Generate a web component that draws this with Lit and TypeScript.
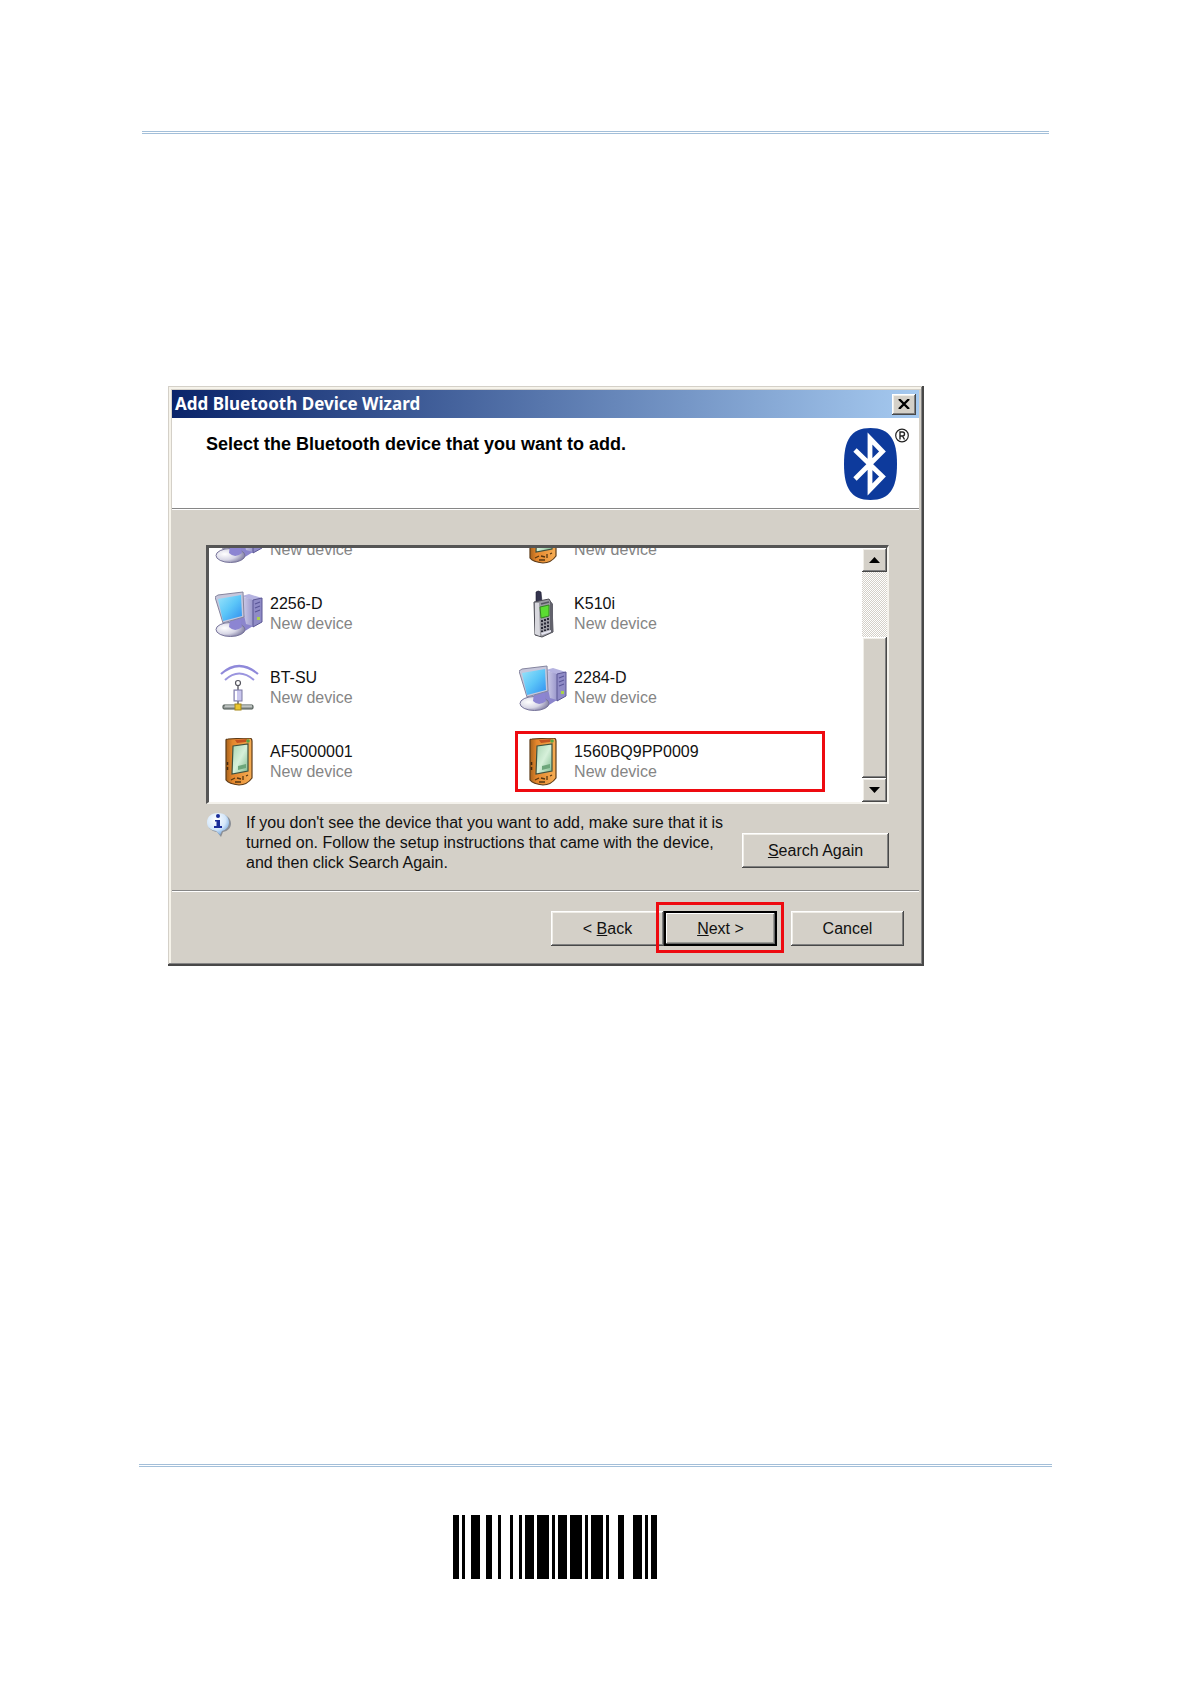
import { LitElement, html, css, svg } from "lit";
import { customElement } from "lit/decorators.js";

type Kind = "computer" | "phone" | "antenna" | "pda";

interface Device {
  name: string;
  kind: Kind;
  marked?: boolean;
}

const DEVICES: Device[] = [
  { name: "", kind: "computer" },
  { name: "", kind: "pda" },
  { name: "2256-D", kind: "computer" },
  { name: "K510i", kind: "phone" },
  { name: "BT-SU", kind: "antenna" },
  { name: "2284-D", kind: "computer" },
  { name: "AF5000001", kind: "pda" },
  { name: "1560BQ9PP0009", kind: "pda", marked: true },
];

// Alternating bar and gap widths, in modules.
const BARS = [
  2, 1, 1, 2, 3, 2, 2, 2, 1, 3, 1, 2, 1, 1, 3, 1, 4, 1, 1, 1, 3, 1, 4, 1, 1, 1,
  4, 1, 1, 3, 2, 3, 3, 1, 1, 1, 2,
];

const icons = {
  computer: svg`
    <defs>
      <linearGradient id="scr" x1="0" y1="0" x2="1" y2="1">
        <stop offset="0" stop-color="#9be4fa"/><stop offset=".5" stop-color="#5cc6f8"/><stop offset="1" stop-color="#2f8df0"/>
      </linearGradient>
      <linearGradient id="tow" x1="0" y1="0" x2="1" y2="0">
        <stop offset="0" stop-color="#d6d5ee"/><stop offset="1" stop-color="#9a97cb"/>
      </linearGradient>
      <radialGradient id="bas" cx=".3" cy=".4" r=".75">
        <stop offset="0" stop-color="#ffffff"/><stop offset=".55" stop-color="#d8d7e6"/><stop offset="1" stop-color="#77749c"/>
      </radialGradient>
    </defs>
    <path d="M27 6 L34 4 L47 8 L38 11 Z" fill="#b5b3e0"/>
    <path d="M26 6 L38 10 L38 37 L26 33 Z" fill="url(#tow)"/>
    <path d="M38 10 L47 8 L47 32 L38 37 Z" fill="#8f8bc6" stroke="#5b5794" stroke-width="1"/>
    <path d="M40 14 L45 12 M40 18 L45 16 M40 22 L45 20" stroke="#5a5698" stroke-width="1.200"/>
    <rect x="42" y="27" width="3" height="3" fill="#a9d24a"/>
    <path d="M22 28 L29 25 L31 34 L38 36 L30 41 L24 40 Z" fill="#8b85cc"/>
    <ellipse cx="15.500" cy="39.500" rx="14.500" ry="7" fill="url(#bas)" stroke="#77749a" stroke-width="1"/>
    <path d="M15 29 L25 27 L27 37 Q20 43 14 37 Z" fill="#8c85d2"/>
    <path d="M0 7 L3 5 L28 2 L29 27 L8 33 Z" fill="#c6c7dc" stroke="#85859f" stroke-width="1"/>
    <path d="M3 9 L26 5 L27 26 L8 31 Z" fill="url(#scr)"/>`,
  phone: svg`
    <path d="M17 2 Q19 0 22 2 L23 12 L17 12 Z" fill="#34344e" stroke="#1d1d30" stroke-width=".6"/>
    <path d="M15 12 L30 9 L33 14 L34 42 L23 47 L16 45 Z" fill="#9b9ba2" stroke="#4d4d55" stroke-width="1"/>
    <path d="M16 13 L20 13 L21 46 L16 44 Z" fill="#d8d8de"/>
    <path d="M31 11 L34 14 L34 42 L31 43 Z" fill="#62626c"/>
    <path d="M22 14 L30 12" stroke="#555560" stroke-width="1.500"/>
    <path d="M21 17 L30 15 L30 26 L22 28 Z" fill="#5bdc32" stroke="#348423" stroke-width="1"/>
    <path d="M23 30 V42 M26 29 V41 M29 28 V40" stroke="#292936" stroke-width="2" stroke-dasharray="2 1.500"/>
    <path d="M22 43 L32 40 L32 42 L23 45 Z" fill="#e4e4f0"/>`,
  antenna: svg`
    <path d="M6 10 Q24 -6 43 10" fill="none" stroke="#8f89da" stroke-width="2.200"/>
    <path d="M10 16 Q24 3 39 16" fill="none" stroke="#9b95df" stroke-width="2"/>
    <circle cx="23" cy="19" r="2.500" fill="#fff" stroke="#56565f" stroke-width="1.200"/>
    <path d="M23 22 V42" stroke="#65656e" stroke-width="1.500"/>
    <rect x="19" y="26" width="8" height="11" fill="#cac7ee" stroke="#7b79a2" stroke-width="1"/>
    <rect x="20" y="27" width="2" height="9" fill="#fff"/>
    <rect x="8" y="41" width="30" height="4" rx="1" fill="#9aa09e" stroke="#45504b" stroke-width="1"/>
    <path d="M10 42 H37" stroke="#e6eae7" stroke-width="1"/>
    <rect x="20" y="40" width="6" height="6" fill="#eac52f" stroke="#a58718" stroke-width="1"/>`,
  pda: svg`
    <defs>
      <linearGradient id="cas" x1="0" y1="0" x2="1" y2="0">
        <stop offset="0" stop-color="#a8641d"/><stop offset=".25" stop-color="#e4862c"/><stop offset="1" stop-color="#f6ae55"/>
      </linearGradient>
      <linearGradient id="lcd" x1="0" y1="0" x2="1" y2="1">
        <stop offset="0" stop-color="#a7d3b0"/><stop offset=".5" stop-color="#d6f0da"/><stop offset="1" stop-color="#7db98c"/>
      </linearGradient>
    </defs>
    <path d="M11 2 Q11 1 13 1 L34 0 Q37 0 37 3 L37 40 Q32 47 24 47 Q14 46 11 42 Z" fill="url(#cas)" stroke="#5e3b17" stroke-width="1.200"/>
    <path d="M20 2 L32 1 L31 4 L22 5 Z" fill="#c4521f"/>
    <circle cx="33" cy="3" r="1.800" fill="#58a345"/>
    <path d="M18 8 L33 6 L33 33 L17 36 Z" fill="url(#lcd)" stroke="#3d5140" stroke-width="1.200"/>
    <path d="M23 28 L31 26 L31 30 L23 32 Z" fill="#6da67b"/>
    <path d="M12.500 24 V34" stroke="#42280f" stroke-width="1.500" stroke-dasharray="3 2"/>
    <path d="M16 42 L20 40 M22 40 L26 41 M28 38 V42 M31 38 L33 37 M20 44 L26 44" stroke="#573711" stroke-width="1.300"/>`,
};

@customElement("device-item")
class DeviceItem extends LitElement {
  static properties = { name: {}, kind: {}, marked: { type: Boolean } };
  declare name: string;
  declare kind: Kind;
  declare marked: boolean;

  static styles = css`
    :host {
      display: block;
    }
    .item {
      position: relative;
      display: flex;
      align-items: center;
      gap: 7px;
      font: 16px/20px "Liberation Sans", Arial, sans-serif;
    }
    .icon {
      flex: none;
      width: 48px;
      height: 48px;
    }
    .text {
      display: flex;
      flex-direction: column;
    }
    .name {
      min-height: 20px;
      color: #111;
    }
    .state {
      color: #858585;
    }
    .marked::after {
      content: "";
      position: absolute;
      inset: -7px 37px -6px -4px;
      border: 3px solid #ee0a10;
    }
  `;

  render() {
    return html`<div class="item ${this.marked ? "marked" : ""}">
      <svg class="icon" viewBox="0 0 48 48" aria-hidden="true">${icons[this.kind]}</svg>
      <div class="text">
        <span class="name">${this.name}</span>
        <span class="state">New device</span>
      </div>
    </div>`;
  }
}

@customElement("app-root")
class AppRoot extends LitElement {
  static styles = css`
    :host {
      display: block;
    }
    * {
      box-sizing: border-box;
    }
    .page {
      display: flex;
      flex-direction: column;
      min-height: 100vh;
      background: #fff;
      font: 16px/20px "Liberation Sans", Arial, sans-serif;
      color: #111;
    }
    .rule {
      height: 3px;
      border: solid #a3bfd9;
      border-width: 1px 0;
    }
    .top {
      padding: 131px 141px 0 142px;
    }
    .main {
      flex: 1;
      padding: 252px 168px 0;
    }
    .bottom {
      padding: 0 138px 105px 139px;
    }
    .barcode {
      display: block;
      width: 204px;
      height: 64px;
      margin: 48px 0 0 314px;
    }
    .window {
      max-width: 756px;
      padding: 4px 5px 4px 4px;
      background: #d4d0c8;
      box-shadow: inset -2px -2px #484848, inset 1px 1px #d4d0c8,
        inset -3px -3px #858585, inset 3px 3px #f6f3ea;
    }
    .titlebar {
      display: flex;
      align-items: center;
      justify-content: space-between;
      height: 28px;
      padding: 0 3px;
      background: linear-gradient(90deg, #0a246a, #a6caf0);
    }
    .title {
      margin: 0;
      font: bold 17px/28px "Noto Sans", "Open Sans", sans-serif;
      color: #fff;
    }
    button {
      display: flex;
      align-items: center;
      justify-content: center;
      margin: 0;
      padding: 0;
      border: 0;
      border-radius: 0;
      background: #d4d0c8;
      font: inherit;
      color: #111;
      white-space: pre;
      box-shadow: inset -1px -1px #484848, inset 1px 1px #fff,
        inset -2px -2px #808080, inset 2px 2px #f0eee8;
    }
    .close {
      width: 24px;
      height: 21px;
    }
    .heading {
      display: flex;
      justify-content: space-between;
      align-items: flex-start;
      height: 90px;
      padding: 10px 9px 0 34px;
      background: #fff;
    }
    .prompt {
      margin: 6px 0 0;
      font: bold 18px/20px "Liberation Sans", Arial, sans-serif;
      color: #000;
    }
    .logo {
      flex: none;
      width: 66px;
      height: 72px;
    }
    .groove {
      height: 2px;
      border-top: 1px solid #868686;
      background: #fff;
    }
    .content {
      padding: 35px 30px 17px 34px;
    }
    .list {
      display: flex;
      height: 259px;
      border: solid;
      border-width: 3px 2px 2px 3px;
      border-color: #555 #f4f2ec #f4f2ec #555;
      background: #fff;
    }
    .view {
      flex: 1;
      min-width: 0;
      display: flex;
      align-items: flex-end;
      overflow: hidden;
      padding: 0 0 16px 6px;
    }
    .devices {
      flex: 1;
      display: grid;
      grid-template-columns: 47fr 53fr;
      row-gap: 26px;
      margin: 0;
      padding: 0;
      list-style: none;
    }
    .scroll {
      display: flex;
      flex-direction: column;
      width: 25px;
      background: repeating-conic-gradient(#d4d0c8 0 25%, #fff 0 50%) 0 0 / 2px 2px;
    }
    .arrow {
      height: 24px;
    }
    .track {
      flex: 1;
    }
    .thumb {
      height: 141px;
    }
    .info {
      display: flex;
      align-items: flex-start;
      gap: 14px;
      margin-top: 8px;
    }
    .balloon {
      flex: none;
      width: 26px;
      height: 26px;
    }
    .hint {
      flex: 1;
      margin: 0;
      padding-top: 1px;
      white-space: pre-line;
    }
    .search {
      flex: none;
      width: 147px;
      height: 35px;
      margin-top: 21px;
    }
    .actions {
      display: flex;
      justify-content: flex-end;
      padding: 19px 15px 16px;
    }
    .action {
      width: 113px;
      height: 35px;
    }
    .default {
      position: relative;
      margin-right: 14px;
    }
    .default .action {
      box-shadow: inset 0 0 0 2px #000, inset -3px -3px #666,
        inset 3px 3px #fff, inset -4px -4px #9a9a94;
    }
    .default::after {
      content: "";
      position: absolute;
      inset: -9px -7px -7px -8px;
      border: 3px solid #ee0a10;
      pointer-events: none;
    }
  `;

  private bars() {
    let x = 0;
    return BARS.map((w, i) => {
      const at = x;
      x += w;
      return i % 2 ? null : svg`<rect x=${at} y="0" width=${w} height="1"/>`;
    });
  }

  render() {
    return html`<div class="page">
      <header class="top"><div class="rule"></div></header>
      <main class="main">
        <section class="window" aria-labelledby="title">
          <div class="titlebar">
            <h1 class="title" id="title">Add Bluetooth Device Wizard</h1>
            <button class="close" aria-label="Close">
              <svg width="12" height="10" viewBox="0 0 12 10" aria-hidden="true">
                <path d="M1 0 L11 10 M11 0 L1 10" stroke="#000" stroke-width="2.300" />
              </svg>
            </button>
          </div>
          <div class="heading">
            <h2 class="prompt">Select the Bluetooth device that you want to add.</h2>
            <svg class="logo" viewBox="0 0 66 72" role="img" aria-label="Bluetooth">
              <path d="M26.500 0 C46 0 53 12 53 36 C53 60 46 72 26.500 72 C7 72 0 60 0 36 C0 12 7 0 26.500 0 Z" fill="#0d3a9c" />
              <path d="M11 22 L38.500 48.500 L26 61.500 V10.500 L38.500 23.500 L11 51" fill="none" stroke="#fff" stroke-width="4.800" stroke-miterlimit="6" />
              <circle cx="58" cy="7.500" r="6.300" fill="#fff" stroke="#222" stroke-width="1.200" />
              <path d="M56 11.500 V4 H58.500 Q60.500 4 60.500 6 Q60.500 8 58.500 8 H56 M58.500 8 L60.500 11.500" fill="none" stroke="#222" stroke-width="1.400" />
            </svg>
          </div>
          <div class="groove"></div>
          <div class="content">
            <div class="list">
              <div class="view">
                <ul class="devices">
                  ${DEVICES.map(
                    (d) => html`<li>
                      <device-item .name=${d.name} .kind=${d.kind} .marked=${!!d.marked}></device-item>
                    </li>`
                  )}
                </ul>
              </div>
              <div class="scroll">
                <button class="arrow" aria-label="Scroll up">
                  <svg width="11" height="6" viewBox="0 0 11 6" aria-hidden="true"><path d="M0 6 L5.500 0 L11 6 Z" /></svg>
                </button>
                <div class="track"></div>
                <button class="thumb" aria-label="Scroll position"></button>
                <button class="arrow" aria-label="Scroll down">
                  <svg width="11" height="6" viewBox="0 0 11 6" aria-hidden="true"><path d="M0 0 L5.500 6 L11 0 Z" /></svg>
                </button>
              </div>
            </div>
            <div class="info">
              <svg class="balloon" viewBox="0 0 26 26" aria-hidden="true">
                <defs>
                  <radialGradient id="bub" cx=".4" cy=".3" r=".75">
                    <stop offset="0" stop-color="#ffffff" /><stop offset=".6" stop-color="#d4e7fa" /><stop offset="1" stop-color="#6fa3dc" />
                  </radialGradient>
                </defs>
                <path d="M13 2 C20 2 25 6 25 11.500 C25 16 22 19 17 20 L15 25 L11 20 C5 19 2 16 2 11.500 C2 6 6 2 13 2 Z" fill="#8b8f96" />
                <path d="M12 1 C19 1 23 5 23 10.500 C23 15 20 18 16 19 L14 23 L10 19 C4 18 1 15 1 10.500 C1 5 5 1 12 1 Z" fill="url(#bub)" />
                <circle cx="12" cy="4" r="2" fill="#1a2d9a" />
                <path d="M9 8 H14 V14 H16 V16 H8 V14 H10.500 V9.500 H9 Z" fill="#1a2d9a" />
              </svg>
              <p class="hint">${"If you don't see the device that you want to add, make sure that it is\nturned on. Follow the setup instructions that came with the device,\nand then click Search Again."}</p>
              <button class="search"><u>S</u>earch Again</button>
            </div>
          </div>
          <div class="groove"></div>
          <div class="actions">
            <button class="action">&lt; <u>B</u>ack</button>
            <div class="default"><button class="action"><u>N</u>ext &gt;</button></div>
            <button class="action">Cancel</button>
          </div>
        </section>
      </main>
      <footer class="bottom">
        <div class="rule"></div>
        <svg class="barcode" viewBox="0 0 68 1" preserveAspectRatio="none" shape-rendering="crispEdges" role="img" aria-label="Barcode">${this.bars()}</svg>
      </footer>
    </div>`;
  }
}
